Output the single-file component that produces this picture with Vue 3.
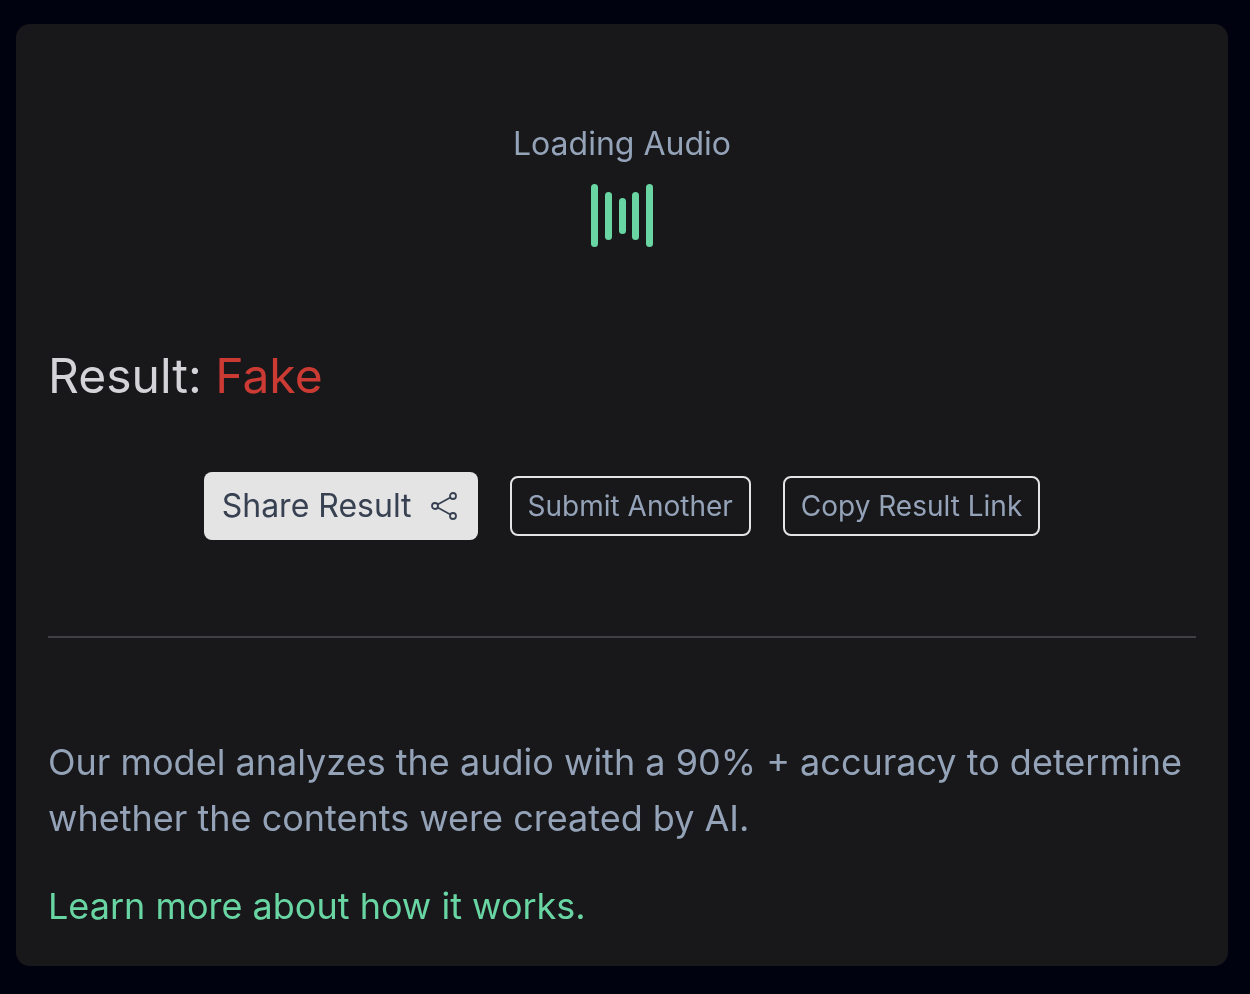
<template>
  <div class="page">
    <div class="card">
      <div class="loading">
        <p class="loading-label">Loading Audio</p>
        <div class="bars">
          <span class="bar tall"></span>
          <span class="bar mid"></span>
          <span class="bar short"></span>
          <span class="bar mid"></span>
          <span class="bar tall"></span>
        </div>
      </div>

      <h2 class="result">Result: <span class="fake">Fake</span></h2>

      <div class="actions">
        <button class="btn-share">
          Share Result
          <svg class="share-icon" viewBox="0 0 28 28" fill="none" stroke="currentColor" stroke-width="1.8">
            <circle cx="23" cy="4" r="3" />
            <circle cx="5" cy="14" r="3" />
            <circle cx="23" cy="24" r="3" />
            <path d="M7.6 12.5 20.4 5.5M7.6 15.5l12.8 7" />
          </svg>
        </button>
        <button class="btn-outline">Submit Another</button>
        <button class="btn-outline">Copy Result Link</button>
      </div>

      <hr class="divider" />

      <p class="about">
        Our model analyzes the audio with a 90% + accuracy to determine whether the contents were created by AI.
      </p>
      <a class="learn" href="#">Learn more about how it works.</a>
    </div>
  </div>
</template>

<script setup>
</script>

<style>
html, body { background: #00020f; }
</style>

<style scoped>
.page {
  padding: 24px 22px 28px 16px;
  font-family: Inter, "Liberation Sans", sans-serif;
}
.card {
  background: #18181b;
  border-radius: 14px;
  padding: 88px 32px 40px;
  height: 942px;
  box-sizing: border-box;
  will-change: transform;
}
.loading {
  display: flex;
  flex-direction: column;
  align-items: center;
  gap: 8px;
}
.loading-label {
  margin: 0;
  font-size: 32px;
  line-height: 64px;
  color: #94a3b8;
}
.bars {
  display: flex;
  align-items: center;
  gap: 6.75px;
  height: 63px;
}
.bar {
  width: 7px;
  border-radius: 4px;
  background: #68d5a3;
}
.bar.tall { height: 63px; }
.bar.mid { height: 48px; }
.bar.short { height: 36px; }

.result {
  margin: 93px 0 0;
  font-size: 48px;
  line-height: 72px;
  font-weight: 400;
  color: #d4d4d8;
}
.fake { color: #cb3a33; }

.actions {
  display: flex;
  justify-content: center;
  align-items: center;
  gap: 32px;
  margin-top: 60px;
}
.btn-share {
  display: flex;
  align-items: center;
  gap: 18px;
  height: 68px;
  padding: 0 20px 2px 18px;
  border: 0;
  border-radius: 8px;
  background: #e4e4e4;
  color: #374151;
  font-family: inherit;
  font-size: 32px;
}
.share-icon { width: 28px; height: 28px; margin-top: 2px; }
.btn-outline {
  height: 60px;
  padding: 0 16px;
  border: 2px solid #e4e4e7;
  border-radius: 8px;
  background: transparent;
  color: #94a3b8;
  font-family: inherit;
  font-size: 28px;
}
.divider {
  margin: 96px 0 0;
  border: 0;
  border-top: 2px solid #3f3f46;
}
.about {
  margin: 96px 0 0;
  font-size: 36px;
  line-height: 56px;
  color: #94a3b8;
}
.learn {
  display: block;
  margin-top: 32px;
  font-size: 36px;
  line-height: 56px;
  color: #68d5a3;
  text-decoration: none;
}
</style>
